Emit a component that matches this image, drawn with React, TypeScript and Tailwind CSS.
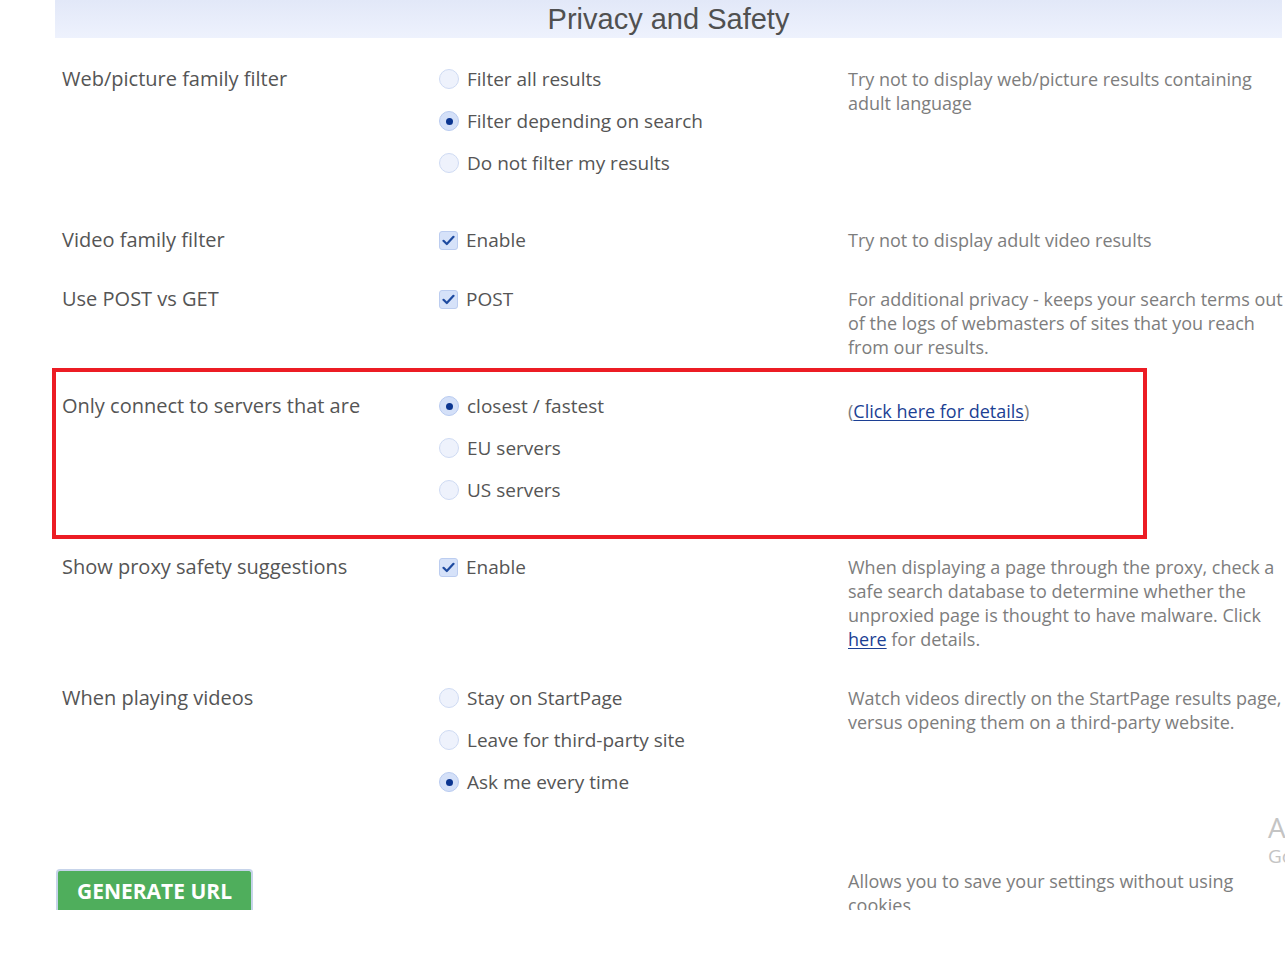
import React from 'react';

type Row = {
  label: string;
  kind: 'radio' | 'check';
  options: string[];
  selected: number;
  desc: React.ReactNode;
  boxed?: boolean;
};

const linkCls = 'text-[#1c3f94] underline underline-offset-2';

const ROWS: Row[] = [
  {
    label: 'Web/picture family filter',
    kind: 'radio',
    options: ['Filter all results', 'Filter depending on search', 'Do not filter my results'],
    selected: 1,
    desc: (
      <>
        Try not to display web/picture results containing
        <br />
        adult language
      </>
    ),
  },
  {
    label: 'Video family filter',
    kind: 'check',
    options: ['Enable'],
    selected: 0,
    desc: 'Try not to display adult video results',
  },
  {
    label: 'Use POST vs GET',
    kind: 'check',
    options: ['POST'],
    selected: 0,
    desc: (
      <>
        For additional privacy - keeps your search terms out
        <br />
        of the logs of webmasters of sites that you reach
        <br />
        from our results.
      </>
    ),
  },
  {
    label: 'Only connect to servers that are',
    kind: 'radio',
    options: ['closest / fastest', 'EU servers', 'US servers'],
    selected: 0,
    boxed: true,
    desc: (
      <span className="mt-[5px] block">
        (<a className={linkCls}>Click here for details</a>)
      </span>
    ),
  },
  {
    label: 'Show proxy safety suggestions',
    kind: 'check',
    options: ['Enable'],
    selected: 0,
    desc: (
      <>
        When displaying a page through the proxy, check a
        <br />
        safe search database to determine whether the
        <br />
        unproxied page is thought to have malware. Click
        <br />
        <a className={linkCls}>here</a> for details.
      </>
    ),
  },
  {
    label: 'When playing videos',
    kind: 'radio',
    options: ['Stay on StartPage', 'Leave for third-party site', 'Ask me every time'],
    selected: 2,
    desc: (
      <>
        Watch videos directly on the StartPage results page,
        <br />
        versus opening them on a third-party website.
      </>
    ),
  },
];

function Radio({ on }: { on: boolean }) {
  return (
    <span
      className={`flex h-[20px] w-[20px] shrink-0 items-center justify-center rounded-full border ${
        on ? 'border-[#b9cbf0] bg-[#d4e0f8]' : 'border-[#cfdbf3] bg-[#eef2fc]'
      }`}
    >
      {on && <span className="h-[7px] w-[7px] rounded-full bg-[#0b3590]" />}
    </span>
  );
}

function Check() {
  return (
    <span className="flex h-[19px] w-[19px] shrink-0 items-center justify-center rounded-[3px] border border-[#bccdf0] bg-[#d6e2f9]">
      <svg width="13" height="11" viewBox="0 0 13 11" fill="none">
        <path d="M1.5 5.8 L4.8 9 L11.5 1.8" stroke="#1d4aa0" strokeWidth="2.2" strokeLinecap="round" strokeLinejoin="round" />
      </svg>
    </span>
  );
}

export default function App() {
  return (
    <div
      className="relative h-[910px] w-[1285px] overflow-hidden bg-white"
      style={{ fontFamily: '"Open Sans", Lato, sans-serif' }}
    >
      {/* section header */}
      <div className="ml-[55px] flex h-[38px] w-[1227px] items-center justify-center bg-gradient-to-b from-[#e2e8f8] to-[#eef2fd]">
        <h2
          className="text-[29px] leading-none text-[#505050]"
          style={{ fontFamily: '"Liberation Sans", Arial, sans-serif' }}
        >
          Privacy and Safety
        </h2>
      </div>

      <div className="ml-[55px] pl-[7px] pt-[29px]">
        {ROWS.map((row) => (
          <div key={row.label} className="relative flex pb-[35px]">
            {row.boxed && (
              <div className="pointer-events-none absolute left-[-10px] top-[-26px] h-[171px] w-[1095px] border-4 border-[#ec1c24]" />
            )}
            <div className="w-[377px] text-[20px] leading-6 text-[#555]">{row.label}</div>
            <div className="w-[409px]">
              {row.options.map((opt, i) => (
                <div
                  key={opt}
                  className={`flex h-6 items-center gap-[8px] text-[19px] text-[#555] ${
                    row.kind === 'radio' ? 'mb-[18px]' : ''
                  }`}
                >
                  {row.kind === 'radio' ? <Radio on={i === row.selected} /> : <Check />}
                  <span className="pt-[1px]">{opt}</span>
                </div>
              ))}
            </div>
            <div className="whitespace-nowrap text-[18px] leading-6 text-[#7d7d7d]">{row.desc}</div>
          </div>
        ))}

        {/* generate url row */}
        <div className="relative flex items-start pt-[10px]">
          <div className="w-[786px]">
            <button className="ml-[-6px] mt-[12px] h-[44px] w-[197px] rounded-t-[4px] border-2 border-b-0 border-[#c7d4ea] bg-[#4fae5c] text-[21px] font-bold text-white">
              GENERATE URL
            </button>
          </div>
          <div className="mt-[12px] whitespace-nowrap text-[18px] leading-6 text-[#7d7d7d]">
            Allows you to save your settings without using
            <br />
            cookies
          </div>
        </div>
      </div>

      {/* cut-off content from the next column */}
      <div className="absolute left-[1268px] top-[810px] text-[#c4c4c4]">
        <div className="text-[28px] leading-[34px]">A</div>
        <div className="text-[19px] leading-6">Go</div>
      </div>
    </div>
  );
}
